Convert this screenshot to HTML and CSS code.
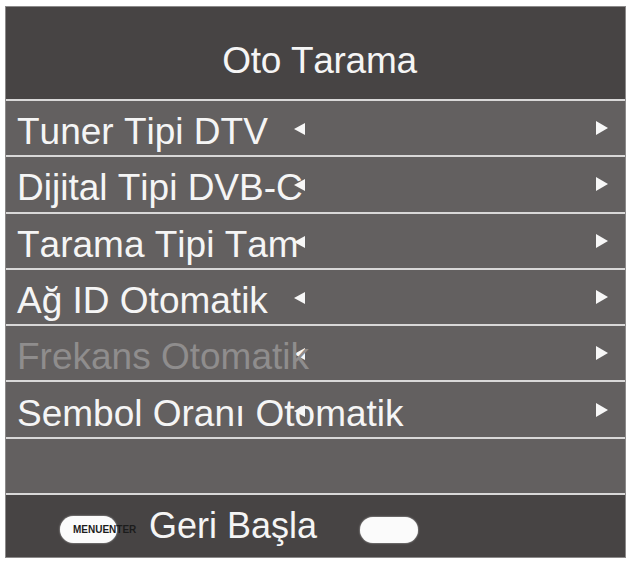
FILE: index.html
```html
<!DOCTYPE html>
<html lang="tr">
<head>
<meta charset="utf-8">
<title>Oto Tarama</title>
<link rel="stylesheet" href="styles.css">
</head>
<body>
<div class="panel">
  <div class="header">Oto Tarama</div>

  <div class="row">
    <span class="label">Tuner Tipi DTV</span>
    <svg class="arr-l" viewBox="0 0 12 12"><polygon points="11,0 11,12 0,6"/></svg>
    <svg class="arr-r" viewBox="0 0 13 14"><polygon points="1,0 13,7 1,14"/></svg>
  </div>
  <div class="row">
    <span class="label">Dijital Tipi DVB-C</span>
    <svg class="arr-l" viewBox="0 0 12 12"><polygon points="11,0 11,12 0,6"/></svg>
    <svg class="arr-r" viewBox="0 0 13 14"><polygon points="1,0 13,7 1,14"/></svg>
  </div>
  <div class="row">
    <span class="label">Tarama Tipi Tam</span>
    <svg class="arr-l" viewBox="0 0 12 12"><polygon points="11,0 11,12 0,6"/></svg>
    <svg class="arr-r" viewBox="0 0 13 14"><polygon points="1,0 13,7 1,14"/></svg>
  </div>
  <div class="row">
    <span class="label">Ağ ID Otomatik</span>
    <svg class="arr-l" viewBox="0 0 12 12"><polygon points="11,0 11,12 0,6"/></svg>
    <svg class="arr-r" viewBox="0 0 13 14"><polygon points="1,0 13,7 1,14"/></svg>
  </div>
  <div class="row">
    <span class="label disabled">Frekans Otomatik</span>
    <svg class="arr-l" viewBox="0 0 12 12"><polygon points="11,0 11,12 0,6"/></svg>
    <svg class="arr-r" viewBox="0 0 13 14"><polygon points="1,0 13,7 1,14"/></svg>
  </div>
  <div class="row">
    <span class="label">Sembol Oranı Otomatik</span>
    <svg class="arr-l" viewBox="0 0 12 12"><polygon points="11,0 11,12 0,6"/></svg>
    <svg class="arr-r" viewBox="0 0 13 14"><polygon points="1,0 13,7 1,14"/></svg>
  </div>
  <div class="row"></div>

  <div class="footer">
    <span class="pill"><span class="pill-text">MENUENTER</span></span>
    <span class="footer-text">Geri Başla</span>
    <span class="pill pill-right"></span>
  </div>
</div>
</body>
</html>
```

FILE: styles.css
```css
* {
  box-sizing: border-box;
}

html, body {
  margin: 0;
  padding: 0;
  background: #ffffff;
}

body {
  font-family: "Liberation Sans", Arial, sans-serif;
  font-kerning: none;
  color: #f5f5f5;
}

.panel {
  margin: 6px 0 0 5px;
  width: 621px;
  border: 1px solid #8c8a8a;
  background: #636060;
}

.header {
  height: 92px;
  background: #474444;
  padding-top: 33px;
  padding-left: 8px;
  text-align: center;
  font-size: 37px;
  line-height: 42px;
  letter-spacing: -0.3px;
}

.row {
  height: 56.3px;
  border-top: 2px solid #d9d8d8;
  background: #636060;
  display: grid;
  grid-template-columns: 288px 12px 1fr 13px 17px;
  grid-template-rows: 1fr;
  align-items: center;
}

.label {
  grid-column: 1 / 4;
  grid-row: 1;
  z-index: 1;
  padding-left: 11px;
  padding-top: 8px;
  font-size: 37px;
  line-height: 42px;
  white-space: nowrap;
}

.label.disabled {
  color: #8f8d8d;
}

.arr-l {
  grid-column: 2;
  grid-row: 1;
  width: 12px;
  height: 12px;
  fill: #f7f7f7;
  margin-top: 2px;
}

.arr-r {
  grid-column: 4;
  grid-row: 1;
  width: 13px;
  height: 14px;
  fill: #f7f7f7;
}

.footer {
  height: 64px;
  border-top: 2px solid #d9d8d8;
  background: #474444;
  display: flex;
  align-items: center;
  padding-left: 54px;
}

.pill {
  flex: none;
  width: 57px;
  height: 27px;
  border-radius: 14px;
  background: #fbfbfb;
  box-shadow: 0 0 2px rgba(255, 255, 255, 0.7);
  margin-top: 7px;
  padding-left: 13px;
}

.pill-text {
  display: block;
  font-size: 10px;
  font-weight: bold;
  line-height: 27px;
  color: #1c1c1c;
  white-space: nowrap;
}

.footer-text {
  margin-left: 32px;
  font-size: 36px;
  line-height: 40px;
  white-space: nowrap;
}

.pill-right {
  width: 58px;
  height: 26px;
  margin-left: 43px;
  margin-top: 8px;
}
```
